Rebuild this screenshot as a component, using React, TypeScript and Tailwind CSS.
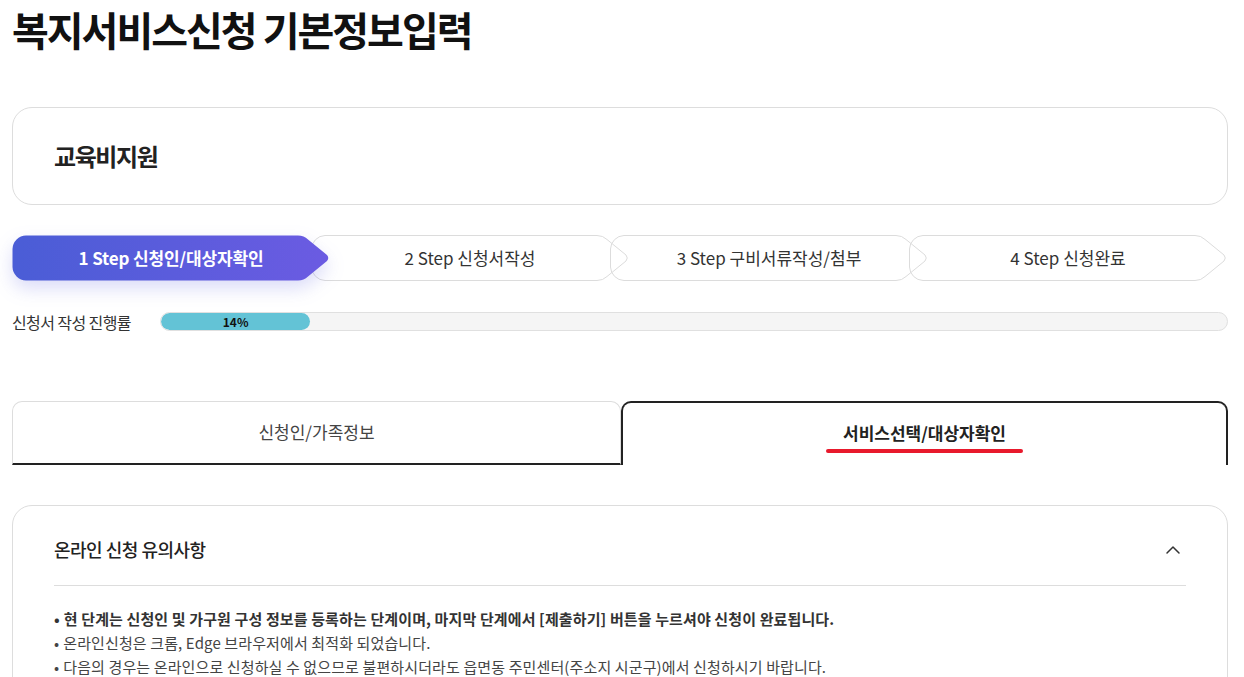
import { ChevronUp } from "lucide-react";

const steps = [
  { no: 1, label: "신청인/대상자확인" },
  { no: 2, label: "신청서작성" },
  { no: 3, label: "구비서류작성/첨부" },
  { no: 4, label: "신청완료" },
];

const notices = [
  {
    text: "현 단계는 신청인 및 가구원 구성 정보를 등록하는 단계이며, 마지막 단계에서 [제출하기] 버튼을 누르셔야 신청이 완료됩니다.",
    bold: true,
  },
  { text: "온라인신청은 크롬, Edge 브라우저에서 최적화 되었습니다.", bold: false },
  {
    text: "다음의 경우는 온라인으로 신청하실 수 없으므로 불편하시더라도 읍면동 주민센터(주소지 시군구)에서 신청하시기 바랍니다.",
    bold: false,
  },
];

// step chevron outline: rounded left, arrow point on the right
const W = 318;
const H = 46;
const A = 26;
const R = 14;
const stepPath = `M ${R} 0.5 H ${W - A - 6} Q ${W - A} 0.5 ${W - A + 4} 4.5 L ${W - 3} ${H / 2 - 3} Q ${W - 0.5} ${H / 2} ${W - 3} ${H / 2 + 3} L ${W - A + 4} ${H - 4.5} Q ${W - A} ${H - 0.5} ${W - A - 6} ${H - 0.5} H ${R} A ${R} ${R} 0 0 1 0.5 ${H - R} V ${R} A ${R} ${R} 0 0 1 ${R} 0.5 Z`;

function StepItem({ no, label, index }: { no: number; label: string; index: number }) {
  const active = index === 0;
  return (
    <div
      className={`relative w-[318px] h-[46px] shrink-0 flex items-center justify-center ${
        index > 0 ? "-ml-[19px]" : ""
      } ${active ? "z-10" : ""}`}
    >
      <svg
        width={W}
        height={H}
        viewBox={`0 0 ${W} ${H}`}
        className={`absolute inset-0 ${active ? "drop-shadow-[0_8px_9px_rgba(90,95,225,0.22)]" : ""}`}
      >
        <defs>
          <linearGradient id="stepGrad" x1="0" y1="0" x2="1" y2="0">
            <stop offset="0%" stopColor="#4a5dd6" />
            <stop offset="100%" stopColor="#6b5be2" />
          </linearGradient>
        </defs>
        {active ? (
          <path d={stepPath} fill="url(#stepGrad)" />
        ) : (
          <path d={stepPath} fill="none" stroke="#dcdcdc" strokeWidth={1} />
        )}
      </svg>
      <span
        className={`relative text-[17px] ${
          active ? "text-white font-bold tracking-[-0.15px]" : "text-[#333] tracking-[0px]"
        }`}
      >
        {no} Step {label}
      </span>
    </div>
  );
}

export default function App() {
  const progress = 14;

  return (
    <div className="min-h-screen bg-white pl-[12px] pr-[16px] font-['Noto_Sans_CJK_KR',sans-serif] text-[#222]">
      {/* Title */}
      <div className="h-[58px] flex items-center">
        <h1 className="text-[40px] font-bold tracking-[-2px] text-[#111] leading-none">
          복지서비스신청 기본정보입력
        </h1>
      </div>

      {/* Service card */}
      <div className="mt-[49px] h-[98px] rounded-[20px] border border-[#dddddd] flex items-center pl-[41px]">
        <span className="text-[24px] font-bold tracking-[-1.4px] text-[#222]">교육비지원</span>
      </div>

      {/* Steps */}
      <div className="mt-[30px] flex">
        {steps.map((s, i) => (
          <StepItem key={s.no} no={s.no} label={s.label} index={i} />
        ))}
      </div>

      {/* Progress */}
      <div className="mt-[31px] flex items-center h-[19px]">
        <span className="w-[148px] shrink-0 text-[16px] tracking-[-0.6px] text-[#333]">
          신청서 작성 진행률
        </span>
        <div className="flex-1 h-[19px] rounded-full bg-[#f5f5f5] border border-[#e0e0e0] overflow-hidden">
          <div
            className="h-full rounded-full bg-[#63c3d6] flex items-center justify-center"
            style={{ width: `${progress}%` }}
          >
            <span className="text-[12px] font-bold text-[#111]">{progress}%</span>
          </div>
        </div>
      </div>

      {/* Tabs */}
      <div className="mt-[70px] flex h-[64px]">
        <div className="w-[609px] shrink-0 rounded-t-[10px] border border-[#dddddd] border-b-2 border-b-[#222] flex items-center justify-center pb-[2px]">
          <span className="text-[17px] tracking-[0px] text-[#444]">신청인/가족정보</span>
        </div>
        <div className="flex-1 rounded-t-[10px] border-2 border-b-0 border-[#222] flex items-center justify-center pb-[2px]">
          <span className="relative text-[17px] font-bold tracking-[0px] text-[#222]">
            서비스선택/대상자확인
            <span className="absolute -left-[17px] -right-[17px] top-[29px] h-[4px] rounded-full bg-[#e8192c]" />
          </span>
        </div>
      </div>

      {/* Notice card */}
      <div className="mt-[40px] rounded-[20px] border border-[#dddddd] px-[41px] pb-[24px]">
        <div className="h-[80px] pt-[8px] flex items-center justify-between border-b border-[#dddddd]">
          <span className="text-[18px] font-medium tracking-[-0.5px] text-[#222]">
            온라인 신청 유의사항
          </span>
          <ChevronUp size={24} strokeWidth={1.5} className="text-[#333] mr-[1px]" />
        </div>
        <ul className="pt-[21px] flex flex-col">
          {notices.map((n, i) => (
            <li
              key={i}
              className={`h-[24px] flex items-center text-[15px] tracking-[0.12px] ${
                n.bold ? "font-bold text-[#333]" : "text-[#444]"
              }`}
            >
              <span className="mr-[4px]">•</span>
              {n.text}
            </li>
          ))}
        </ul>
      </div>
    </div>
  );
}
